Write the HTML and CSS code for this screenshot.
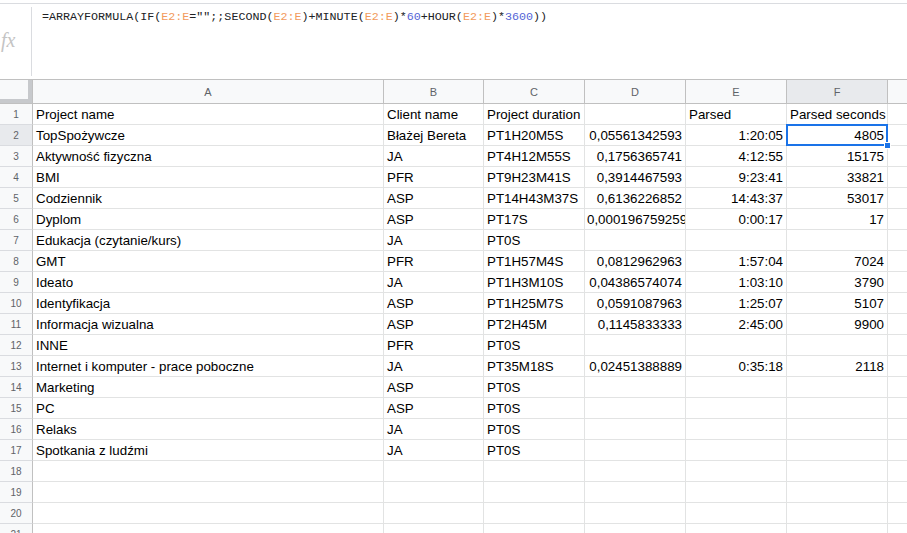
FILE: index.html
```html
<!DOCTYPE html>
<html lang="pl">
<head>
  <meta charset="UTF-8" />
  <title>Arkusz - Projekty</title>
  <link rel="stylesheet" href="styles.css">
</head>
<body>

<div class="formula-bar">
  <div class="fx">fx</div>
  <div class="formula">=ARRAYFORMULA(IF(<span class="ref">E2:E</span>="";;SECOND(<span class="ref">E2:E</span>)+MINUTE(<span class="ref">E2:E</span>)*<span class="num">60</span>+HOUR(<span class="ref">E2:E</span>)*<span class="num">3600</span>))</div>
</div>

<table class="sheet">
  <thead>
    <tr>
      <th class="corner"></th>
      <th class="col-a">A</th>
      <th class="col-b">B</th>
      <th class="col-n">C</th>
      <th class="col-n">D</th>
      <th class="col-n">E</th>
      <th class="col-n active">F</th>
      <th class="col-n"></th>
    </tr>
  </thead>
  <tbody>
    <tr><th>1</th><td>Project name</td><td>Client name</td><td>Project duration</td><td></td><td>Parsed</td><td>Parsed seconds</td><td></td></tr>
    <tr><th class="active">2</th><td>TopSpożywcze</td><td>Błażej Bereta</td><td>PT1H20M5S</td><td class="r">0,05561342593</td><td class="r">1:20:05</td><td class="r selected">4805<div class="sel"><div class="handle"></div></div></td><td></td></tr>
    <tr><th>3</th><td>Aktywność fizyczna</td><td>JA</td><td>PT4H12M55S</td><td class="r">0,1756365741</td><td class="r">4:12:55</td><td class="r">15175</td><td></td></tr>
    <tr><th>4</th><td>BMI</td><td>PFR</td><td>PT9H23M41S</td><td class="r">0,3914467593</td><td class="r">9:23:41</td><td class="r">33821</td><td></td></tr>
    <tr><th>5</th><td>Codziennik</td><td>ASP</td><td>PT14H43M37S</td><td class="r">0,6136226852</td><td class="r">14:43:37</td><td class="r">53017</td><td></td></tr>
    <tr><th>6</th><td>Dyplom</td><td>ASP</td><td>PT17S</td><td class="clip">0,000196759259</td><td class="r">0:00:17</td><td class="r">17</td><td></td></tr>
    <tr><th>7</th><td>Edukacja (czytanie/kurs)</td><td>JA</td><td>PT0S</td><td></td><td></td><td></td><td></td></tr>
    <tr><th>8</th><td>GMT</td><td>PFR</td><td>PT1H57M4S</td><td class="r">0,0812962963</td><td class="r">1:57:04</td><td class="r">7024</td><td></td></tr>
    <tr><th>9</th><td>Ideato</td><td>JA</td><td>PT1H3M10S</td><td class="r">0,04386574074</td><td class="r">1:03:10</td><td class="r">3790</td><td></td></tr>
    <tr><th>10</th><td>Identyfikacja</td><td>ASP</td><td>PT1H25M7S</td><td class="r">0,0591087963</td><td class="r">1:25:07</td><td class="r">5107</td><td></td></tr>
    <tr><th>11</th><td>Informacja wizualna</td><td>ASP</td><td>PT2H45M</td><td class="r">0,1145833333</td><td class="r">2:45:00</td><td class="r">9900</td><td></td></tr>
    <tr><th>12</th><td>INNE</td><td>PFR</td><td>PT0S</td><td></td><td></td><td></td><td></td></tr>
    <tr><th>13</th><td>Internet i komputer - prace poboczne</td><td>JA</td><td>PT35M18S</td><td class="r">0,02451388889</td><td class="r">0:35:18</td><td class="r">2118</td><td></td></tr>
    <tr><th>14</th><td>Marketing</td><td>ASP</td><td>PT0S</td><td></td><td></td><td></td><td></td></tr>
    <tr><th>15</th><td>PC</td><td>ASP</td><td>PT0S</td><td></td><td></td><td></td><td></td></tr>
    <tr><th>16</th><td>Relaks</td><td>JA</td><td>PT0S</td><td></td><td></td><td></td><td></td></tr>
    <tr><th>17</th><td>Spotkania z ludźmi</td><td>JA</td><td>PT0S</td><td></td><td></td><td></td><td></td></tr>
    <tr><th>18</th><td></td><td></td><td></td><td></td><td></td><td></td><td></td></tr>
    <tr><th>19</th><td></td><td></td><td></td><td></td><td></td><td></td><td></td></tr>
    <tr><th>20</th><td></td><td></td><td></td><td></td><td></td><td></td><td></td></tr>
    <tr><th>21</th><td></td><td></td><td></td><td></td><td></td><td></td><td></td></tr>
  </tbody>
</table>

</body>
</html>
```

FILE: styles.css
```css
* {
  box-sizing: border-box;
}

body {
  margin: 0;
  width: 907px;
  height: 533px;
  overflow: hidden;
  background: #fff;
  font-family: "Liberation Sans", Arial, sans-serif;
  color: #000;
}

/* pasek formuły */
.formula-bar {
  display: flex;
  margin-top: 3px;
  height: 76px;
  border-top: 1px solid #dadce0;
}

.fx {
  width: 32px;
  margin: 3px 0;
  border-right: 1px solid #dadce0;
  display: flex;
  align-items: center;
  padding-left: 1px;
  padding-bottom: 2px;
  font-family: "Liberation Serif", serif;
  font-style: italic;
  font-size: 20px;
  color: #c4c4c4;
}

.formula {
  padding: 5px 0 0 10px;
  font-family: "Liberation Mono", monospace;
  font-size: 11.7px;
  line-height: 16px;
  color: #202124;
  white-space: nowrap;
}

.formula .ref {
  color: #f29b5c;
}

.formula .num {
  color: #5465d6;
}

/* siatka arkusza */
.sheet {
  border-collapse: separate;
  border-spacing: 0;
  table-layout: fixed;
  width: 988px;
}

.sheet th,
.sheet td {
  white-space: nowrap;
  overflow: hidden;
}

.sheet thead th {
  height: 25px;
  background: #f8f9fa;
  border-top: 1px solid #c0c0c0;
  border-bottom: 1px solid #c0c0c0;
  border-right: 1px solid #c0c0c0;
  font-weight: normal;
  font-size: 11px;
  color: #5f6368;
  text-align: center;
  vertical-align: middle;
  padding: 0;
}

.sheet thead th.corner {
  width: 33px;
  box-shadow: inset -4px -4px 0 #c7c9cc;
}

.sheet thead .col-a { width: 351px; }
.sheet thead .col-b { width: 100px; }
.sheet thead .col-n { width: 101px; }

.sheet thead th.active,
.sheet tbody th.active {
  background: #e8eaed;
}

.sheet tbody th {
  height: 21px;
  background: #f8f9fa;
  border-right: 1px solid #c0c0c0;
  border-bottom: 1px solid #dadce0;
  font-weight: normal;
  font-size: 10px;
  color: #5f6368;
  text-align: center;
  vertical-align: middle;
  padding: 0;
}

.sheet td {
  height: 21px;
  border-right: 1px solid #e2e3e3;
  border-bottom: 1px solid #e2e3e3;
  padding: 0 3px 1px 3px;
  font-size: 13.33px;
  line-height: 17px;
  vertical-align: bottom;
  text-align: left;
}

.sheet td.r {
  text-align: right;
}

.sheet td.clip {
  text-overflow: clip;
  padding-left: 2px;
}

.sheet td.selected {
  position: relative;
  overflow: visible;
}

.sel {
  position: absolute;
  top: -1px;
  left: -1px;
  right: -1px;
  bottom: -1px;
  border: 2px solid #1a73e8;
}

.handle {
  position: absolute;
  right: -5px;
  bottom: -5px;
  width: 7px;
  height: 7px;
  background: #1a73e8;
  border: 1px solid #fff;
}
```
